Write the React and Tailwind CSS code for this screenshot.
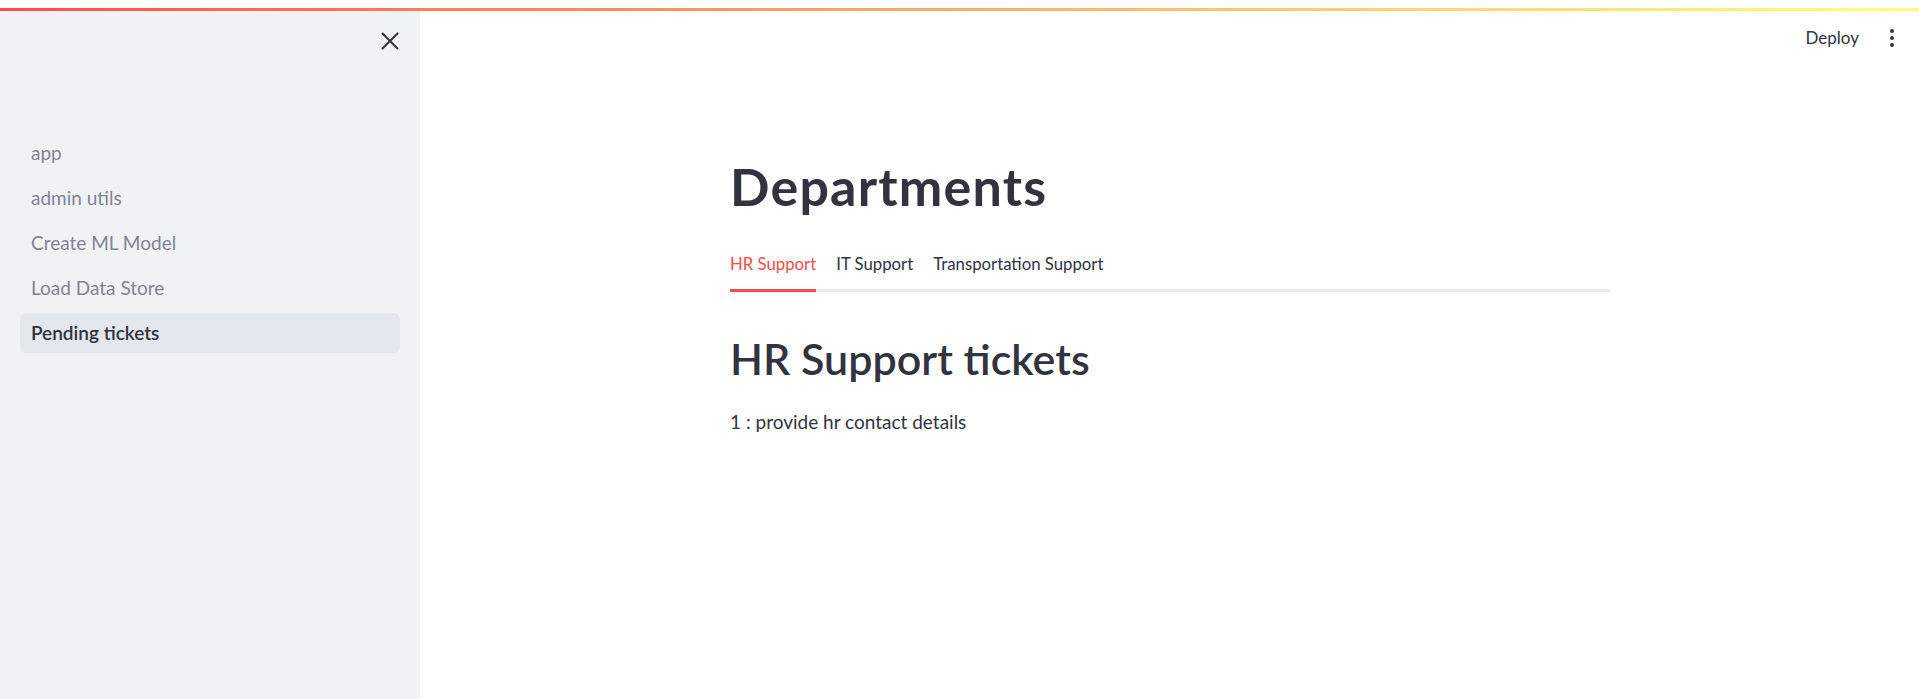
import React from "react";
import { X, EllipsisVertical } from "lucide-react";

const navItems = ["app", "admin utils", "Create ML Model", "Load Data Store", "Pending tickets"];

export default function App() {
  return (
    <div className="h-[699px] w-[1919px] overflow-hidden bg-white flex flex-col font-['Lato',sans-serif] text-[#31333f]">
      <div className="h-[8px] bg-white" />
      <div className="h-[3px] bg-linear-to-r from-[#ff4b4b] to-[#fffd80]" />
      <div className="flex flex-1 min-h-0">
        <aside className="w-[420px] shrink-0 bg-[#f0f2f6] flex flex-col">
          <div className="flex justify-end pt-[15px] pr-[15px]">
            <X size={30} strokeWidth={1.6} className="text-[#31333f]" />
          </div>
          <nav className="mt-[77px] px-[20px] flex flex-col gap-[5px]">
            {navItems.map((item) => {
              const active = item === "Pending tickets";
              return (
                <div
                  key={item}
                  className={
                    active
                      ? "h-[40px] px-[11px] rounded-[6px] flex items-center text-[19px] leading-[28px] bg-[#e3e7ee] text-[#31333f] font-semibold"
                      : "h-[40px] px-[11px] rounded-[6px] flex items-center text-[19px] leading-[28px] text-[#808495]"
                  }
                >
                  {item}
                </div>
              );
            })}
          </nav>
        </aside>
        <main className="flex-1 flex flex-col">
          <header className="h-[50px] flex justify-end items-start pt-[15px] pr-[15px]">
            <span className="text-[17px] leading-[24px] mr-[21px]">Deploy</span>
            <EllipsisVertical size={24} strokeWidth={2} className="text-[#31333f]" />
          </header>
          <div className="ml-[310px] w-[880px] flex flex-col">
            <h1 className="mt-[94px] text-[52px] leading-[62px] font-bold tracking-[1.2px]">Departments</h1>
            <div className="mt-[35px] flex gap-[20px] border-b-[3px] border-[#e8e8ea]">
              <div className="-mb-[3px] pb-[13px] border-b-[3px] border-[#ff4b4b] text-[16.75px] leading-[24px] text-[#ff4b4b]">
                HR Support
              </div>
              <div className="pb-[13px] text-[16.75px] leading-[24px]">IT Support</div>
              <div className="pb-[13px] text-[16.75px] leading-[24px]">Transportation Support</div>
            </div>
            <h2 className="mt-[41px] text-[43px] leading-[51px] font-semibold">HR Support tickets</h2>
            <p className="mt-[24px] text-[19px] leading-[28px]">1 : provide hr contact details</p>
          </div>
        </main>
      </div>
    </div>
  );
}
